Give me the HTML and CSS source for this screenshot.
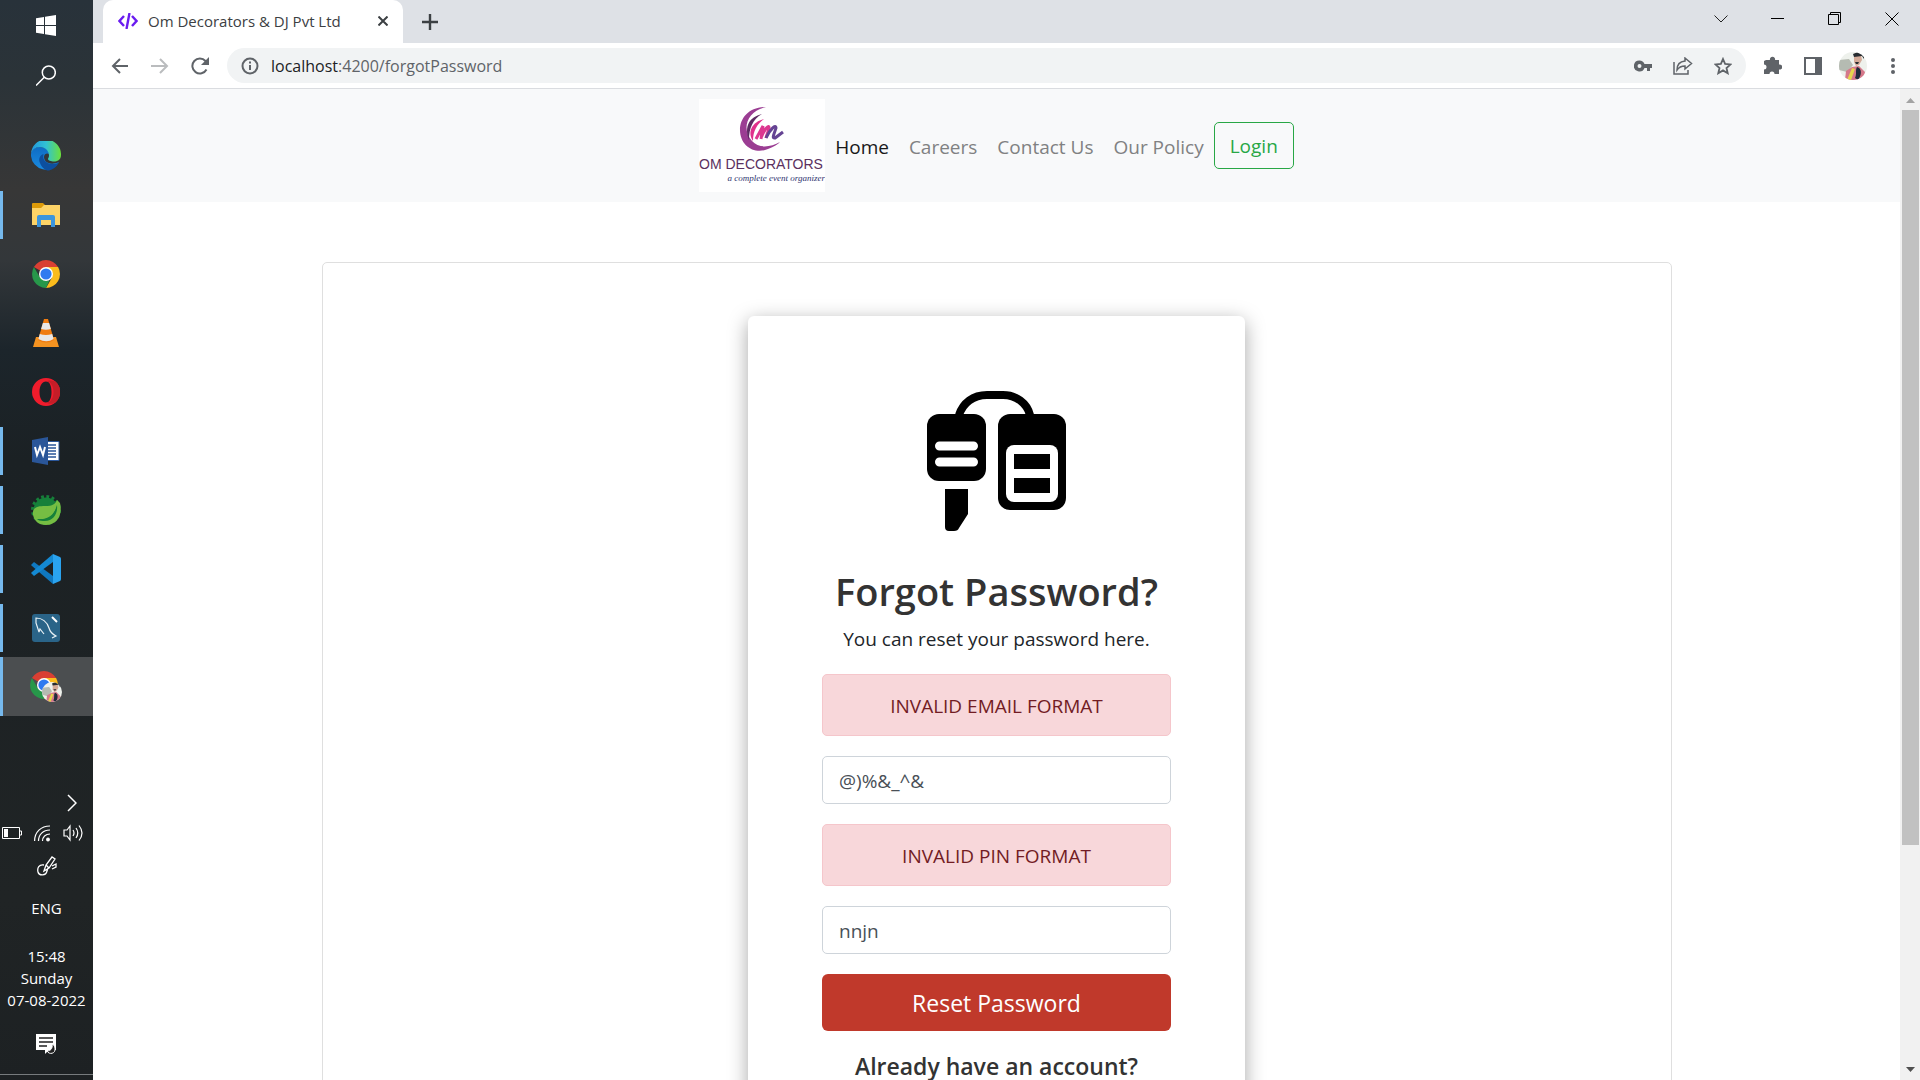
FILE: index.html
```html
<!DOCTYPE html>
<html lang="en">
<head>
<meta charset="utf-8">
<meta name="viewport" content="width=device-width, initial-scale=1">
<title>Om Decorators &amp; DJ Pvt Ltd</title>
<link rel="stylesheet" href="styles.css">
</head>
<body>
<svg class="defs" width="0" height="0" aria-hidden="true">
  <defs>
    <symbol id="chrome" viewBox="0 0 28 28">
      <path fill="#d93f33" d="M14 14 1.9 7A14 14 0 0 1 26.1 7Z"/>
      <path fill="#fbbc1c" d="M14 7h12.1A14 14 0 0 1 14 28l6-10.5Z"/>
      <path fill="#27974a" d="M14 28A14 14 0 0 1 1.9 7L8 17.5l6 3.500 3.500-.8Z"/>
      <circle cx="14" cy="14" r="7" fill="#fff"/>
      <circle cx="14" cy="14" r="5.600" fill="#2f7bf0"/>
    </symbol>
    <symbol id="portrait" viewBox="0 0 28 28">
      <clipPath id="round"><circle cx="14" cy="14" r="14"/></clipPath>
      <g clip-path="url(#round)">
        <path fill="#eef1ec" d="M0 0h28v28H0z"/>
        <path fill="#b5bbb2" d="M0 8 10 7l4 6-6 7-8-2z"/>
        <path fill="#d5788a" d="m7 19 6-4 7-1 6 6-2 8H6z"/>
        <path fill="#e6d64b" d="m13 16 3 1-4 11H8z"/>
        <path fill="#202c3c" d="M18 15c5 1 5 8 1 13l-3-2c2-4 0-8 2-11z"/>
        <path fill="#d4aa98" d="m15 4 7-1 1 5-3 5-3 1-2-4z"/>
        <path fill="#272c30" d="m14 2 5-2 6 2v5l-2-3-8 1zM16 10l4 0-1 2h-2z"/>
      </g>
    </symbol>
  </defs>
</svg>

<div class="desktop">
  <aside class="taskbar" aria-label="Taskbar">
    <div class="taskbar-top">
      <button class="tb-btn" aria-label="Start">
        <svg width="20" height="21" viewBox="0 0 20 21" fill="#fff"><path d="M0 3.200 8 2v8H0zM9 1.800 20 0v10H9zM0 11h8v8L0 17.800zM9 11h11v10L9 19.200z"/></svg>
      </button>
      <button class="tb-btn" aria-label="Search">
        <svg width="20" height="21" viewBox="0 0 20 21" fill="none" stroke="#fff" stroke-width="1.500"><circle cx="12.800" cy="7.500" r="6.500"/><path d="M8.300 12.200 0 20.500"/></svg>
      </button>
    </div>
    <div class="apps">
      <button class="app" aria-label="Edge">
        <svg width="30" height="30" viewBox="0 0 30 30">
          <defs>
            <linearGradient id="e1" x1="0" x2="1"><stop offset="0" stop-color="#2196de"/><stop offset=".5" stop-color="#31c2d4"/><stop offset="1" stop-color="#6be03b"/></linearGradient>
            <linearGradient id="e2" x1="0" x2="0" y2="1"><stop offset="0" stop-color="#0f6cc4"/><stop offset="1" stop-color="#1a8be0"/></linearGradient>
          </defs>
          <path fill="url(#e2)" d="M0 13C1 7 6 6 9 6c6 0 9 4 9 7-1-1-5-1-5 3 0 5 6 9 15 5A15 15 0 0 1 0 15z"/>
          <path fill="#0d4f9e" d="M12.500 13C9 14 7 18 9 22c2 5 6 8 9 7.500 4-1 7-3 10-8-7 3-12 1-14.500-2-1.500-2-1.500-4-1-6.500z"/>
          <path fill="url(#e1)" d="M0 13A15 15 0 0 1 30 14c0 5-4 6.500-7 6.500s-6-1-6-2.500c0-1 1-1.500 1-3.500C18 10 14 6 9 6 4 6 1 9 0 13z"/>
        </svg>
      </button>
      <button class="app open" aria-label="File Explorer">
        <svg width="28" height="24" viewBox="0 0 28 24"><path fill="#dd9a08" d="M0 1q0-1 1-1h10l2 2-1 3H0z"/><path fill="#fdd367" d="M0 5h9l3-3h16v20H0z"/><path fill="#3d95dc" d="M5 24V14q0-2 2-2h14q2 0 2 2v10h-4v-7H9v7z"/></svg>
      </button>
      <button class="app" aria-label="Chrome"><svg width="28" height="28"><use href="#chrome"/></svg></button>
      <button class="app" aria-label="VLC">
        <svg width="26" height="28" viewBox="0 0 26 28"><path fill="#f49321" d="M3 18h20l3 10H0z"/><path fill="#f07c10" d="M11 0h4l6 21q-8 5-16 0z"/><path fill="#e7e7e7" d="m9.900 4h6.200l1.800 6q-5 1.500-9.800 0zM6.800 15q6 2 12.400 0l1.400 5q-7 4.500-15.200 0z"/></svg>
      </button>
      <button class="app" aria-label="Opera">
        <svg width="28" height="28" viewBox="0 0 28 28"><path fill="#f01c2c" fill-rule="evenodd" d="M14 0a14 14 0 1 0 0 28 14 14 0 0 0 0-28zm0 3.500c4 0 5.500 5 5.500 10.500S18 24.500 14 24.500 7.500 20 7.500 14 10 3.500 14 3.500z"/><path fill="#c51d28" d="M14 3.500c5-2.500 8 0 9.500 0a14 14 0 0 1 0 21c-3 2-7 1.500-9.500 0 5 0 7.500-5 7.500-10.500S19 3.500 14 3.500z"/></svg>
      </button>
      <button class="app open" aria-label="Word">
        <svg width="28" height="28" viewBox="0 0 28 28"><path fill="#fff" stroke="#2a5699" d="M14 4.500h13v19H14z"/><path stroke="#2a5699" stroke-width="1.500" d="M16 8h8M16 11h8M16 14h8M16 17h8M16 20h8"/><path fill="#2a5699" d="m0 3 16-3v28L0 25z"/><path fill="none" stroke="#fff" stroke-width="2" d="m3 10 2 8 3-8 3 8 2-8"/></svg>
      </button>
      <button class="app open" aria-label="Spring Tool Suite">
        <svg width="30" height="30" viewBox="0 0 30 30"><circle cx="15" cy="15" r="12.500" fill="#16803a"/><circle cx="15" cy="15" r="13.500" fill="none" stroke="#16803a" stroke-width="3" stroke-dasharray="2.800 2.500"/><path fill="#76bd43" d="M29 8c3 12-3 22-14 22C7 30 3 25 2 20c-1-8 5-9 12-9 8 0 10-2 12-6z"/><path fill="#16803a" d="M26 10c1 9-4 17-14 16-3 0-5-1-6-2 13 1 17-5 20-14z"/><path fill="#76bd43" d="M25 12c-2 7-8 13-18 11 8-1 14-5 18-11z"/></svg>
      </button>
      <button class="app open" aria-label="Visual Studio Code">
        <svg width="30" height="30" viewBox="0 0 30 30"><path fill="#0f78c0" d="M0 11 3 8l19 14v8L1 12z"/><path fill="#1489d2" d="m0 19 3 3L22 8V0L1 18z"/><path fill="#2aa3ef" d="m22 0 7 3q1 .5 1 2v20q0 1.500-1 2l-7 3z"/></svg>
      </button>
      <button class="app open" aria-label="MySQL Workbench">
        <svg width="28" height="28" viewBox="0 0 28 28"><rect width="28" height="28" rx="3" fill="#2a6488"/><path fill="none" stroke="#e8f1f5" stroke-width="1.200" d="M7 18 4 9V4c6 0 11 4 13 10 1 4 3 6 7 8l-4 2M7 18l1-3 4 5"/><path stroke="#fff" stroke-width="2" d="m20 3 5 5"/></svg>
      </button>
      <button class="app open current" aria-label="Chrome profile">
        <svg width="32" height="32" viewBox="0 0 32 32"><use href="#chrome" width="28" height="28"/><use href="#portrait" x="12" y="11" width="20" height="20"/></svg>
      </button>
    </div>
    <div class="tray">
      <button class="tray-more" aria-label="Show hidden icons"><svg width="10" height="18" viewBox="0 0 10 18" fill="none" stroke="#fff" stroke-width="1.500"><path d="m1 1 8 8-8 8"/></svg></button>
      <div class="tray-row">
        <svg width="20" height="12" viewBox="0 0 20 12"><path fill="none" stroke="#fff" d="M.5.5h17v11H.5zM18 4h1.500v4H18"/><path fill="#fff" d="M2 2h4v8H2z"/></svg>
        <svg width="17" height="17" viewBox="0 0 17 17" fill="none" stroke="#fff" stroke-width="1.200"><path d="M.6 16C.6 7 7 1 16 1M4.500 16C4.500 9.500 9 5 16 5M8.500 16c0-4 3-7 7.500-7"/><circle cx="14" cy="14.500" r="1.300" fill="#fff"/></svg>
        <svg width="21" height="18" viewBox="0 0 21 18" fill="none" stroke="#fff" stroke-width="1.200"><path d="M1 6h3l3-4v14l-3-4H1zM10 6q2 3 0 6M13 4q3.500 5 0 10M16 1.500q6 7.500 0 15"/></svg>
      </div>
      <svg width="20" height="20" viewBox="0 0 20 20" fill="none" stroke="#fff" stroke-width="1.300"><path d="m7 15 2-6 6-8 3 2-6 9zM9 9l3 3M7 9c-5-1-7 3-6 7s8 4 9-1l1-3M15 10l4-2v3l-4 2"/></svg>
      <span class="lang">ENG</span>
      <div class="clock"><span>15:48</span><span>Sunday</span><span>07-08-2022</span></div>
      <button class="tb-btn" aria-label="Notifications"><svg width="20" height="21" viewBox="0 0 20 21"><path fill="#fff" d="M0 0h20v16h-7l-4 4v-4H0z"/><path stroke="#222" stroke-width="1.500" d="M3 4h14M3 8h14M3 12h8"/><path fill="#222" stroke="#fff" d="M16 10c1 5-2 7-5 7 2 4 9 3 8-3-.5-2-1-3-3-4z"/></svg></button>
    </div>
  </aside>

  <div class="browser">
    <header class="tabstrip">
      <div class="tab">
        <svg width="20" height="16" viewBox="0 0 20 16" fill="none" stroke="#6a1cf0" stroke-width="2.400"><path d="M6 3 1.500 8 6 13M14 3l4.500 5L14 13M11.500 0l-3 16"/></svg>
        <span class="tab-title">Om Decorators &amp; DJ Pvt Ltd</span>
        <button class="tab-close" aria-label="Close tab"><svg width="10" height="10" viewBox="0 0 10 10" stroke="#3c4043" stroke-width="2"><path d="m.5.5 9 9M9.500.5l-9 9"/></svg></button>
      </div>
      <button class="new-tab" aria-label="New tab"><svg width="16" height="16" viewBox="0 0 16 16" stroke="#3c4043" stroke-width="2.400"><path d="M8 0v16M0 8h16"/></svg></button>
      <div class="window-controls">
        <button aria-label="Search tabs"><svg width="14" height="8" viewBox="0 0 14 8" fill="none" stroke="#222"><path d="m.5.5 6.500 6.500L13.500.5"/></svg></button>
        <button aria-label="Minimize"><svg width="13" height="13" viewBox="0 0 13 13" stroke="#000"><path d="M0 6.500h13"/></svg></button>
        <button aria-label="Restore"><svg width="13" height="13" viewBox="0 0 13 13" fill="none" stroke="#000"><path d="M.5 2.500h10v10H.5zM2.500 2.500v-2h10v10h-2"/></svg></button>
        <button aria-label="Close"><svg width="14" height="14" viewBox="0 0 14 14" stroke="#000"><path d="m.5.5 13 13M13.500.5l-13 13"/></svg></button>
      </div>
    </header>

    <div class="toolbar">
      <div class="nav-buttons">
        <button aria-label="Back"><svg width="18" height="16" viewBox="0 0 18 16" fill="none" stroke="#5f6368" stroke-width="2"><path d="M17 8H2M9 1 2 8l7 7"/></svg></button>
        <button aria-label="Forward"><svg width="18" height="16" viewBox="0 0 18 16" fill="none" stroke="#babcbe" stroke-width="2"><path d="M0 8h15M9 1l7 7-7 7"/></svg></button>
        <button aria-label="Reload"><svg width="18" height="18" viewBox="0 0 18 18" fill="none" stroke="#5f6368" stroke-width="2"><path d="M15.500 12.500A7.500 7.500 0 1 1 14.500 4L16 5.500"/><path fill="#5f6368" stroke="none" d="M18 0v8h-8z"/></svg></button>
      </div>
      <div class="omnibox">
        <svg width="18" height="18" viewBox="0 0 18 18" fill="none" stroke="#5f6368" stroke-width="2"><circle cx="9" cy="9" r="7.500"/><path d="M9 8v5M9 4.500v2"/></svg>
        <span class="url"><b>localhost</b>:4200/forgotPassword</span>
        <div class="icon-group">
          <button aria-label="Passwords"><svg width="18" height="12" viewBox="0 0 18 12" fill="#5f6368"><path fill-rule="evenodd" d="M5.500.5a5.500 5.500 0 1 0 5 7.500H13v3h3V8h2V4h-7.500a5.500 5.500 0 0 0-5-3.500zm0 3.500a2 2 0 1 1 0 4 2 2 0 0 1 0-4z"/></svg></button>
          <button aria-label="Share"><svg width="20" height="18" viewBox="0 0 20 18" fill="none" stroke="#5f6368" stroke-width="1.500"><path d="M1 5v12h14v-4M12 1l6.500 5.500L12 12V9c-4 0-6 1-8 4 0-5 3-8.500 8-9z"/></svg></button>
          <button aria-label="Bookmark"><svg width="18" height="18" viewBox="0 0 18 18" fill="none" stroke="#5f6368" stroke-width="1.800"><path d="m9 2 2.100 4.900 5.400.5-4 3.600 1.200 5.200L9 13.400l-4.700 2.800L5.500 11l-4-3.600 5.400-.5z"/></svg></button>
        </div>
      </div>
      <div class="icon-group">
        <button aria-label="Extensions"><svg width="18" height="19" viewBox="0 0 18 19" fill="#5f6368"><path d="M2 4h4a2.600 2.600 0 1 1 5 0h4v4.500a2.600 2.600 0 1 1 0 5V18h-4.500a2.500 2.500 0 0 0-5 0H0v-4.500a2.500 2.500 0 0 0 0-5V5z"/></svg></button>
        <button aria-label="Side panel"><svg width="18" height="18" viewBox="0 0 18 18"><path fill="#5f6368" fill-rule="evenodd" d="M0 0h18v18H0zm2 2v14h9V2z"/></svg></button>
        <button aria-label="Profile"><svg width="28" height="28"><use href="#portrait"/></svg></button>
        <button aria-label="Menu"><svg width="4" height="16" viewBox="0 0 4 16" fill="#5f6368"><circle cx="2" cy="2" r="2"/><circle cx="2" cy="8" r="2"/><circle cx="2" cy="14" r="2"/></svg></button>
      </div>
    </div>

    <div class="viewport">
      <div class="page">
        <nav class="navbar">
          <a class="brand" href="#" aria-label="Om Decorators">
            <svg width="126" height="93" viewBox="0 0 126 93">
              <path fill="#fff" d="M0 0h126v93H0z"/>
              <path fill="#9b3d93" d="M67 8C50 8 41 19 41 31c0 16 15 25 28 19 6-2 10-5 12-7-9 5-21 7-28-1C42 30 48 12 67 8z"/>
              <path fill="#5d2a63" d="M63 15C50 18 45 28 50 41c0-12 4-21 13-26z"/>
              <path fill="#e0308c" d="M65 20c-12 3-17 13-11 22 0-10 4-17 11-22z"/>
              <path fill="none" stroke="#dc3790" stroke-width="3" d="m57 40 7-13-2 13M62 39c3-8 7-13 8-11 1 1-2 6-3 11"/>
              <path fill="none" stroke="#654393" stroke-width="3" d="M67 39c4-9 10-14 10-10-1 4-5 11-1 10l8-6"/>
              <text class="logo-name" x="0" y="70">OM DECORATORS</text>
              <text class="logo-tag" x="126" y="82" text-anchor="end">a complete event organizer</text>
            </svg>
          </a>
          <a class="nav-link active" href="#">Home</a>
          <a class="nav-link" href="#">Careers</a>
          <a class="nav-link" href="#">Contact Us</a>
          <a class="nav-link" href="#">Our Policy</a>
          <button class="login">Login</button>
        </nav>

        <main class="panel">
          <form class="card">
            <svg class="keys" width="140" height="140" viewBox="0 0 140 140">
              <path fill="none" stroke="#000" stroke-width="8" d="M32 24C36 12 46 4 60 4h16c13 0 24 8 27 20"/>
              <rect y="23" width="59" height="67" rx="12"/>
              <path stroke="#fff" stroke-width="9" stroke-linecap="round" d="M12.500 55h34M12.500 71h34"/>
              <path d="M18 98h23v25l-9 14q-1 3-5 3h-5q-4 0-4-4z"/>
              <rect x="71" y="23" width="68" height="96" rx="12"/>
              <rect x="79" y="54" width="52" height="57" rx="8" fill="#fff"/>
              <path d="M87 63h36v15H87zM87 87h36v15H87z"/>
            </svg>
            <h2>Forgot Password?</h2>
            <p class="lead">You can reset your password here.</p>
            <div class="alert" role="alert">INVALID EMAIL FORMAT</div>
            <input type="text" aria-label="Email" value="@)%&amp;_^&amp;">
            <div class="alert" role="alert">INVALID PIN FORMAT</div>
            <input type="text" aria-label="PIN" value="nnjn">
            <button class="reset" type="button">Reset Password</button>
            <h4>Already have an account?</h4>
          </form>
        </main>
      </div>
      <div class="scrollbar" aria-hidden="true">
        <svg width="20" height="21" viewBox="0 0 20 21"><path fill="#a3a3a3" d="M6 14h9l-4.500-5z"/></svg>
        <div class="track"><div class="thumb"></div></div>
        <svg width="20" height="20" viewBox="0 0 20 20"><path fill="#505050" d="M6 7h9l-4.500 5z"/></svg>
      </div>
    </div>
  </div>
</div>
</body>
</html>
```
FILE: styles.css
```css
* { box-sizing: border-box; }

body {
  margin: 0;
  font-family: "Open Sans", "Noto Sans", sans-serif;
  font-size: 19px;
  line-height: 30px;
  color: #212529;
}

button {
  margin: 0;
  padding: 0;
  border: 0;
  background: none;
  font: inherit;
  color: inherit;
}

svg { display: block; flex: none; }
.defs { position: absolute; }

.desktop {
  display: flex;
  height: 100vh;
  overflow: hidden;
}

/* Taskbar */
.taskbar {
  flex: none;
  display: flex;
  flex-direction: column;
  width: 93px;
  padding-bottom: 5px;
  color: #fff;
  background: linear-gradient(#28323a 0, #2b3338 80px, #373737 190px, #33373a 260px, #1c252b 350px, #1b2124 460px, #202425 900px, #1d2123 100%);
}

.taskbar-top {
  display: grid;
  grid-auto-rows: 50px;
}

.tb-btn, .app {
  display: grid;
  place-items: center;
  width: 100%;
  padding-right: 1px;
}

.apps {
  display: grid;
  grid-auto-rows: 59px;
  padding-top: 26px;
}

.open { background: linear-gradient(#76b9ed, #76b9ed) left center / 3px 48px no-repeat; }

.current {
  background-color: #4b4e50;
  background-size: 3px 100%;
}

.tray {
  flex: 1;
  display: flex;
  flex-direction: column;
  align-items: center;
  justify-content: flex-end;
  padding-bottom: 19px;
  border-bottom: 1px solid #777b7d;
  font-size: 15px;
  line-height: 22px;
}

.tray-more { align-self: flex-end; padding-right: 16px; }

.tray-row {
  display: flex;
  align-items: center;
  gap: 12px;
  padding: 12px 8px 14px 0;
}

.lang { padding-top: 21px; }

.clock {
  display: grid;
  justify-items: center;
  padding: 26px 0 23px;
}

/* Browser chrome */
.browser {
  flex: 1;
  display: flex;
  flex-direction: column;
  min-width: 0;
}

.tabstrip {
  flex: none;
  display: flex;
  height: 43px;
  padding-left: 10px;
  background: #dee1e6;
}

.tab {
  display: flex;
  align-items: center;
  gap: 10px;
  width: 300px;
  padding: 0 15px 2px;
  border-radius: 10px 10px 0 0;
  background: #fff;
  color: #3c4043;
  font-size: 15px;
}

.tab-title { flex: 1; white-space: nowrap; }
.new-tab { padding: 0 19px; }

.window-controls {
  display: flex;
  height: 37px;
  margin-left: auto;
}

.window-controls button {
  display: grid;
  place-items: center;
  width: 57px;
}

.toolbar {
  flex: none;
  display: flex;
  align-items: center;
  gap: 7px;
  height: 46px;
  padding: 0 7px 0 18px;
  border-bottom: 1px solid #dadce0;
  background: #fff;
}

.nav-buttons { display: flex; align-items: center; gap: 22px; }

.omnibox {
  flex: 1;
  display: flex;
  align-items: center;
  gap: 12px;
  height: 35px;
  margin-left: 11px;
  padding: 0 3px 0 14px;
  border-radius: 18px;
  background: #f1f3f4;
  font-size: 16px;
}

.url { flex: 1; color: #5f6368; }
.url b { font-weight: 400; color: #202124; }

.icon-group {
  display: grid;
  grid-auto-flow: column;
  grid-auto-columns: 40px;
  align-items: center;
  justify-items: center;
}

/* Page */
.viewport {
  flex: 1;
  display: flex;
  min-height: 0;
}

.page {
  flex: 1;
  overflow: hidden;
  background: #fff;
}

.navbar {
  display: flex;
  align-items: center;
  justify-content: center;
  padding: 10px 20px;
  background: #f8f9fa;
}

.logo-name { font: 14px "Liberation Sans", sans-serif; fill: #5b3160; }
.logo-tag { font: italic 9px "Liberation Serif", serif; fill: #2f3470; }

.nav-link {
  padding: 11px 10px 9px;
  color: #808182;
  text-decoration: none;
  white-space: nowrap;
}

.nav-link.active { color: #181819; }

.login {
  height: 47px;
  padding: 1px 15px 0;
  border: 1px solid #28a745;
  border-radius: 5px;
  color: #28a745;
}

.panel {
  width: 1350px;
  max-width: 90%;
  margin: 60px auto;
  padding: 53px 20px 60px;
  border: 1px solid #dfdfdf;
  border-radius: 5px;
}

.card {
  display: grid;
  gap: 20px;
  width: 497px;
  max-width: 100%;
  margin: 0 auto;
  padding: 75px 74px 60px;
  border-radius: 6px;
  background: #fff;
  box-shadow: 0 5px 20px rgba(0, 0, 0, .35);
  text-align: center;
}

.keys { justify-self: center; }

h2, h4, p { margin: 0; }

h2 {
  margin-top: 16px;
  color: #333;
  font-size: 38px;
  font-weight: 600;
  line-height: 48px;
  white-space: nowrap;
}

.lead { margin-top: -11px; }

.alert {
  padding: 16px 15px 14px;
  border: 1px solid #f5c6cb;
  border-radius: 5px;
  background: #f8d7da;
  color: #721c24;
}

input {
  width: 100%;
  height: 48px;
  padding: 2px 16px 0;
  border: 1px solid #ced4da;
  border-radius: 5px;
  background: #fff;
  color: #495057;
  font: inherit;
}

.reset {
  height: 57px;
  border-radius: 6px;
  background: #c0392b;
  color: #fff;
  font-size: 23px;
}

h4 {
  margin-top: -3px;
  color: #333;
  font-size: 23px;
  font-weight: 600;
  line-height: 36px;
}

/* Scrollbar */
.scrollbar {
  display: flex;
  flex-direction: column;
  width: 20px;
  background: #f1f1f1;
}

.track { flex: 1; padding: 0 1px 0 2px; }
.thumb { height: 77.4%; background: #c1c1c1; }
```
